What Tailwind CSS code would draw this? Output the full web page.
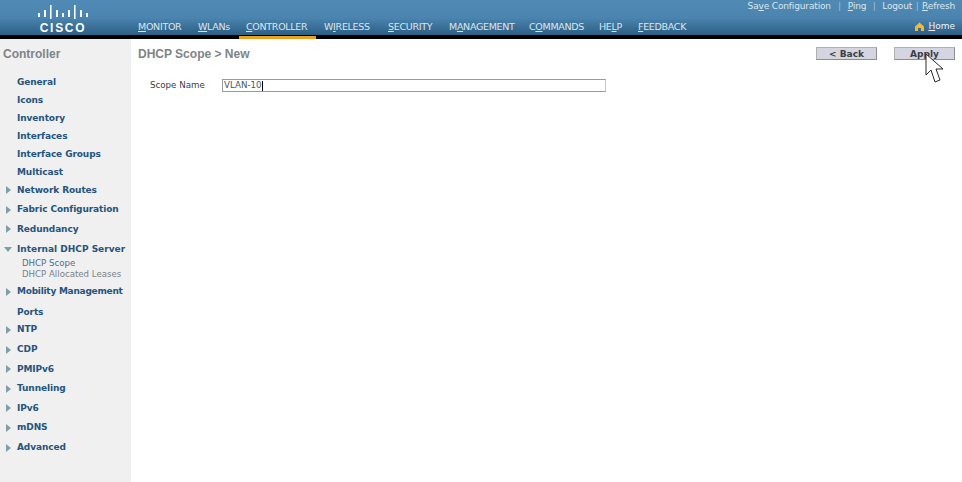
<!DOCTYPE html>
<html><head><meta charset="utf-8">
<script src="https://cdn.jsdelivr.net/npm/@tailwindcss/browser@4"></script>
</head>
<body class="bg-white overflow-hidden font-['DejaVu_Sans',sans-serif]">
<div class="relative w-[962px] h-[482px] flex flex-col overflow-hidden">
  <header class="relative h-[39px] shrink-0 border-b-[4px] border-black bg-gradient-to-b from-[#4f8ab5] via-[#4b85af] to-[#2c5f86]">
    <div class="absolute left-[37px] top-[4px] w-[52px] flex flex-col items-center">
      <svg width="52" height="16" viewBox="0 0 52 16" fill="#f4f8fb">
        <rect x="1" y="9" width="2" height="4"/><rect x="7" y="6" width="2" height="7"/><rect x="13" y="1" width="1.6" height="14"/><rect x="19" y="6" width="2" height="7"/><rect x="25" y="9" width="2" height="4"/><rect x="31" y="6" width="2" height="7"/><rect x="37" y="1" width="1.6" height="14"/><rect x="43" y="6" width="2" height="7"/><rect x="49" y="9" width="2" height="4"/>
      </svg>
      <span class="text-[12px] leading-[13px] mt-[2px] font-bold tracking-[1.7px] text-white font-['Liberation_Sans',sans-serif]">CISCO</span>
    </div>
    <nav class="absolute left-[138px] top-[21px] flex text-[9.5px] leading-[12px] text-[#dbe6ee] tracking-[-0.3px]">
      <span class="w-[60px]"><u>M</u>ONITOR</span>
      <span class="w-[48px]"><u>W</u>LANs</span>
      <span class="relative w-[78px]"><u>C</u>ONTROLLER<span class="absolute left-[-7px] top-[14.5px] w-[77px] h-[3.5px] bg-[#f0a020]"></span></span>
      <span class="w-[64px]">W<u>I</u>RELESS</span>
      <span class="w-[61px]"><u>S</u>ECURITY</span>
      <span class="w-[80px]">M<u>A</u>NAGEMENT</span>
      <span class="w-[70px]">C<u>O</u>MMANDS</span>
      <span class="w-[39px]">HE<u>L</u>P</span>
      <span><u>F</u>EEDBACK</span>
    </nav>
    <div class="absolute right-[7px] top-[0px] flex items-center text-[9px] leading-[12px] tracking-[-0.15px] text-[#dbe6ee]">
      <span>Sa<u>v</u>e Configuration</span><span class="mx-[7px] text-[#9fc0d8]">|</span>
      <span><u>P</u>ing</span><span class="mx-[6.5px] text-[#9fc0d8]">|</span>
      <span>Logout</span><span class="mx-[3.5px] text-[#9fc0d8]">|</span>
      <span><u>R</u>efresh</span>
    </div>
    <div class="absolute right-[7px] top-[20px] flex items-center gap-[4px] text-[9px] leading-[12px] text-[#eef4f8]">
      <svg width="9" height="9" viewBox="0 0 9 9" fill="#f5b82e"><path d="M4.5 0.5 L9 4.5 V9 H6 V6 H3 V9 H0 V4.5 Z"/></svg>
      <span><u>H</u>ome</span>
    </div>
  </header>

  <div class="flex flex-1 min-h-0">
    <aside class="w-[131px] shrink-0 bg-[#f0f0f0] pt-[8px] text-[#24547f] whitespace-nowrap">
      <h2 class="pl-[3px] text-[12px] leading-[14px] font-bold text-[#7d8488] font-['Liberation_Sans',sans-serif]">Controller</h2>
      <ul class="mt-[11.5px] text-[9px] font-bold tracking-[-0.1px]">
        <li class="h-[18px] pl-[17px] leading-[18px]">General</li>
        <li class="h-[18px] pl-[17px] leading-[18px]">Icons</li>
        <li class="h-[18px] pl-[17px] leading-[18px]">Inventory</li>
        <li class="h-[18px] pl-[17px] leading-[18px]">Interfaces</li>
        <li class="h-[18px] pl-[17px] leading-[18px]">Interface Groups</li>
        <li class="h-[18px] pl-[17px] leading-[18px]">Multicast</li>
        <li class="h-[19.6px] flex items-center"><span class="ml-[6px] mr-[6px] w-0 h-0 border-y-[4px] border-y-transparent border-l-[5px] border-l-[#7f9ea8]"></span>Network Routes</li>
        <li class="h-[19.6px] flex items-center"><span class="ml-[6px] mr-[6px] w-0 h-0 border-y-[4px] border-y-transparent border-l-[5px] border-l-[#7f9ea8]"></span>Fabric Configuration</li>
        <li class="h-[19.6px] flex items-center"><span class="ml-[6px] mr-[6px] w-0 h-0 border-y-[4px] border-y-transparent border-l-[5px] border-l-[#7f9ea8]"></span>Redundancy</li>
        <li class="h-[18.5px] pt-[2px] flex items-center tracking-[0px]"><span class="ml-[4px] mr-[5px] w-0 h-0 border-x-[4px] border-x-transparent border-t-[5px] border-t-[#7f9ea8]"></span>Internal DHCP Server</li>
        <li class="pl-[22px] font-normal tracking-normal text-[8.6px] leading-[11px] text-[#4a6f92]">DHCP Scope</li>
        <li class="pl-[22px] font-normal tracking-normal text-[8.6px] leading-[11px] text-[#7a8189]">DHCP Allocated Leases</li>
        <li class="h-[23px] pt-[1px] flex items-center tracking-[-0.25px]"><span class="ml-[6px] mr-[6px] w-0 h-0 border-y-[4px] border-y-transparent border-l-[5px] border-l-[#7f9ea8]"></span>Mobility Management</li>
        <li class="h-[17.5px] pl-[17px] leading-[18px]">Ports</li>
        <li class="h-[19.6px] flex items-center"><span class="ml-[6px] mr-[6px] w-0 h-0 border-y-[4px] border-y-transparent border-l-[5px] border-l-[#7f9ea8]"></span>NTP</li>
        <li class="h-[19.6px] flex items-center"><span class="ml-[6px] mr-[6px] w-0 h-0 border-y-[4px] border-y-transparent border-l-[5px] border-l-[#7f9ea8]"></span>CDP</li>
        <li class="h-[19.6px] flex items-center"><span class="ml-[6px] mr-[6px] w-0 h-0 border-y-[4px] border-y-transparent border-l-[5px] border-l-[#7f9ea8]"></span>PMIPv6</li>
        <li class="h-[19.6px] flex items-center"><span class="ml-[6px] mr-[6px] w-0 h-0 border-y-[4px] border-y-transparent border-l-[5px] border-l-[#7f9ea8]"></span>Tunneling</li>
        <li class="h-[19.6px] flex items-center"><span class="ml-[6px] mr-[6px] w-0 h-0 border-y-[4px] border-y-transparent border-l-[5px] border-l-[#7f9ea8]"></span>IPv6</li>
        <li class="h-[19.6px] flex items-center"><span class="ml-[6px] mr-[6px] w-0 h-0 border-y-[4px] border-y-transparent border-l-[5px] border-l-[#7f9ea8]"></span>mDNS</li>
        <li class="h-[19.6px] flex items-center"><span class="ml-[6px] mr-[6px] w-0 h-0 border-y-[4px] border-y-transparent border-l-[5px] border-l-[#7f9ea8]"></span>Advanced</li>
      </ul>
    </aside>
    <main class="flex-1 pl-[7px] pr-[7px] pt-[8px]">
      <div class="flex justify-between items-start">
        <h1 class="text-[12px] leading-[14px] font-bold text-[#7d8488] font-['Liberation_Sans',sans-serif]">DHCP Scope &gt; New</h1>
        <div class="flex gap-[17px]">
          <button class="w-[61px] h-[13px] bg-[#d4d5e0] border border-[#b0b0b0] border-r-[#8d8d8d] border-b-[#8d8d8d] text-[9px] leading-[10px] font-bold text-[#3a4048]">&lt; Back</button>
          <button class="w-[61px] h-[13px] bg-[#d4d5e0] border border-[#b0b0b0] border-r-[#8d8d8d] border-b-[#8d8d8d] text-[9px] leading-[10px] font-bold text-[#3a4048]">Apply</button>
        </div>
      </div>
      <div class="flex items-center mt-[18px] pl-[12px]">
        <label class="w-[72px] text-[8.7px] leading-[13px] text-[#3c4043]">Scope Name</label>
        <div class="w-[384px] h-[13px] bg-white border border-[#9a9a9a] border-r-[#c4c4c4] flex items-center pl-[1px] text-[8.7px] leading-[11px] text-[#4a5560]">VLAN-10<span class="w-px h-[10px] bg-black"></span></div>
      </div>
    </main>
  </div>

  <svg class="absolute left-[925px] top-[53px]" width="20" height="31" viewBox="0 0 20 31"><path d="M1 1 V22 L6 17 L10 29 L15 27 L11 16 L18 16 Z" fill="#fff" stroke="#2a2a2a" stroke-width="1"/></svg>
</div>
</body></html>
